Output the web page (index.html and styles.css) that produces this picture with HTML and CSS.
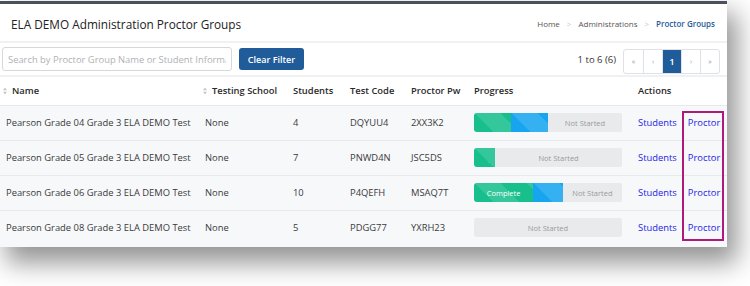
FILE: index.html
```html
<!DOCTYPE html>
<html>
<head>
<meta charset="utf-8">
<link rel="stylesheet" href="styles.css">
</head>
<body>
<div class="card">
  <div class="topbar">
    <h1 class="title">ELA DEMO Administration Proctor Groups</h1>
    <nav class="crumbs">
      <span>Home</span><span class="sep">&gt;</span><span>Administrations</span><span class="sep">&gt;</span><span class="active">Proctor Groups</span>
    </nav>
  </div>
  <div class="filters">
    <div class="left">
      <input class="search" type="text" placeholder="Search by Proctor Group Name or Student Information">
      <button class="btn">Clear Filter</button>
    </div>
    <div class="right">
      <span class="count">1 to 6 (6)</span>
      <div class="pager">
        <span class="pg">&laquo;</span><span class="pg">&lsaquo;</span><span class="pg on">1</span><span class="pg">&rsaquo;</span><span class="pg">&raquo;</span>
      </div>
    </div>
  </div>
  <div class="tablewrap">
    <table class="grid">
      <colgroup>
        <col class="c1"><col class="c2"><col class="c3"><col class="c4"><col class="c5"><col class="c6"><col class="c7">
      </colgroup>
      <thead>
        <tr>
          <th class="sortable first"><svg class="sort" width="4" height="8" viewBox="0 0 4 8"><path d="M0 3.3 L2 0.5 L4 3.3Z M0 4.7 L2 7.5 L4 4.7Z" fill="#c4c6ca"/></svg>Name</th>
          <th class="sortable"><svg class="sort" width="4" height="8" viewBox="0 0 4 8"><path d="M0 3.3 L2 0.5 L4 3.3Z M0 4.7 L2 7.5 L4 4.7Z" fill="#c4c6ca"/></svg>Testing School</th>
          <th>Students</th>
          <th>Test Code</th>
          <th>Proctor Pw</th>
          <th>Progress</th>
          <th>Actions</th>
        </tr>
      </thead>
      <tbody>
        <tr>
          <td class="first">Pearson Grade 04 Grade 3 ELA DEMO Test</td>
          <td class="school">None</td>
          <td>4</td>
          <td>DQYUU4</td>
          <td>2XX3K2</td>
          <td><div class="bar"><div class="seg green" style="width:25%"></div><div class="seg blue" style="width:25%"></div><div class="seg gray">Not Started</div></div></td>
          <td class="acts"><a>Students</a><a>Proctor</a></td>
        </tr>
        <tr>
          <td class="first">Pearson Grade 05 Grade 3 ELA DEMO Test</td>
          <td class="school">None</td>
          <td>7</td>
          <td>PNWD4N</td>
          <td>JSC5DS</td>
          <td><div class="bar"><div class="seg green" style="width:14.3%"></div><div class="seg gray">Not Started</div></div></td>
          <td class="acts"><a>Students</a><a>Proctor</a></td>
        </tr>
        <tr>
          <td class="first">Pearson Grade 06 Grade 3 ELA DEMO Test</td>
          <td class="school">None</td>
          <td>10</td>
          <td>P4QEFH</td>
          <td>MSAQ7T</td>
          <td><div class="bar"><div class="seg green" style="width:40%">Complete</div><div class="seg blue" style="width:20%"></div><div class="seg gray">Not Started</div></div></td>
          <td class="acts"><a>Students</a><a>Proctor</a></td>
        </tr>
        <tr>
          <td class="first">Pearson Grade 08 Grade 3 ELA DEMO Test</td>
          <td class="school">None</td>
          <td>5</td>
          <td>PDGG77</td>
          <td>YXRH23</td>
          <td><div class="bar"><div class="seg gray">Not Started</div></div></td>
          <td class="acts"><a>Students</a><a>Proctor</a></td>
        </tr>
      </tbody>
    </table>
    <div class="highlight"></div>
  </div>
</div>
</body>
</html>
```

FILE: styles.css
```css
* { box-sizing: border-box; }
html, body { margin: 0; padding: 0; background: #ffffff; }
body {
  font-family: "Open Sans", "Liberation Sans", sans-serif;
  color: #3a3a3a;
  padding-top: 1px;
  min-height: 286px;
}
.card {
  width: 727px;
  background: #f7f8fa;
  border-top: 3px solid #4b4f5e;
  padding-bottom: 2px;
  box-shadow: 8px 14px 24px 2px rgba(0, 0, 0, 0.42);
}
.topbar {
  height: 39px;
  display: flex;
  align-items: center;
  justify-content: space-between;
  padding: 2px 12px 0 11px;
  background: #fff;
  border-bottom: 2px solid #f0f1f3;
}
.title {
  margin: 0;
  font-size: 11.8px;
  font-weight: 400;
  color: #222;
}
.crumbs {
  font-size: 8px;
  color: #555;
  display: flex;
  align-items: center;
  gap: 7px;
}
.crumbs .sep { color: #c8c8c8; font-size: 8px; }
.crumbs .active { color: #1f5c99; font-weight: 600; }
.filters {
  height: 34px;
  display: flex;
  align-items: center;
  justify-content: space-between;
  padding: 0 7px 0 2px;
  background: #fff;
  border-bottom: 2px solid #f0f1f3;
}
.left { display: flex; align-items: center; gap: 7px; }
.search {
  width: 230px;
  height: 24px;
  border: 1px solid #d6d8db;
  border-radius: 3px;
  padding: 0 5px;
  font-family: inherit;
  font-size: 9.4px;
  color: #333;
}
.search::placeholder { color: #b0b2b5; }
.btn {
  height: 22px;
  width: 65px;
  background: #1f5c99;
  color: #fff;
  border: none;
  border-radius: 3px;
  font-family: inherit;
  font-size: 9px;
  font-weight: 600;
  padding: 0;
}
.right { display: flex; align-items: center; gap: 7px; }
.count { font-size: 9.5px; color: #333; }
.pager {
  display: flex;
  border: 1px solid #dee1e5;
  border-radius: 3px;
  height: 25px;
  margin-top: 4px;
}
.pg {
  width: 19px;
  display: flex;
  align-items: center;
  justify-content: center;
  font-size: 7px;
  color: #999;
  border-left: 1px solid #dee1e5;
}
.pg:first-child { border-left: none; }
.pg.on {
  background: #1f5c99;
  color: #fff;
  font-size: 9.5px;
  font-weight: 600;
}
.tablewrap { position: relative; }
.grid {
  width: 727px;
  border-collapse: collapse;
  table-layout: fixed;
  font-size: 9.4px;
}
.c1 { width: 203px; }
.c2 { width: 90px; }
.c3 { width: 57px; }
.c4 { width: 61px; }
.c5 { width: 63px; }
.c6 { width: 164px; }
.c7 { width: 89px; }
th {
  height: 28px;
  text-align: left;
  font-weight: 600;
  color: #2a2a2a;
  padding: 0;
  background: #fff;
  white-space: nowrap;
}
th.first { padding-left: 3px; }
.sort { margin-right: 5px; vertical-align: -1px; }
td {
  height: 35px;
  padding: 0;
  background: #f7f8fa;
  border-top: 1px solid #e7e9ec;
  white-space: nowrap;
  color: #3a3a3a;
}
td.first { padding-left: 6px; }
td.school { padding-left: 2px; }
.bar {
  width: 148px;
  height: 19px;
  display: flex;
  border-radius: 3px;
  overflow: hidden;
  background: #e9eaeb;
}
.seg {
  height: 100%;
  display: flex;
  align-items: center;
  justify-content: center;
  font-size: 7.5px;
}
.seg.green, .seg.blue {
  background-image: linear-gradient(45deg, rgba(255,255,255,0.13) 25%, transparent 25%, transparent 50%, rgba(255,255,255,0.13) 50%, rgba(255,255,255,0.13) 75%, transparent 75%, transparent);
  background-size: 52px 52px;
  color: #fff;
  font-weight: 500;
}
.seg.green { background-color: #16bf8c; }
.seg.blue { background-color: #17a5f0; }
.seg.gray { flex: 1; color: #9a9b9d; background: #e9eaeb; }
.acts a {
  color: #2424e8;
  font-size: 9.4px;
  text-decoration: none;
  cursor: pointer;
}
.acts a + a { margin-left: 11px; }
.highlight {
  position: absolute;
  left: 682px;
  top: 34px;
  width: 42px;
  height: 130px;
  border: 2px solid #b0197a;
  pointer-events: none;
}
```
